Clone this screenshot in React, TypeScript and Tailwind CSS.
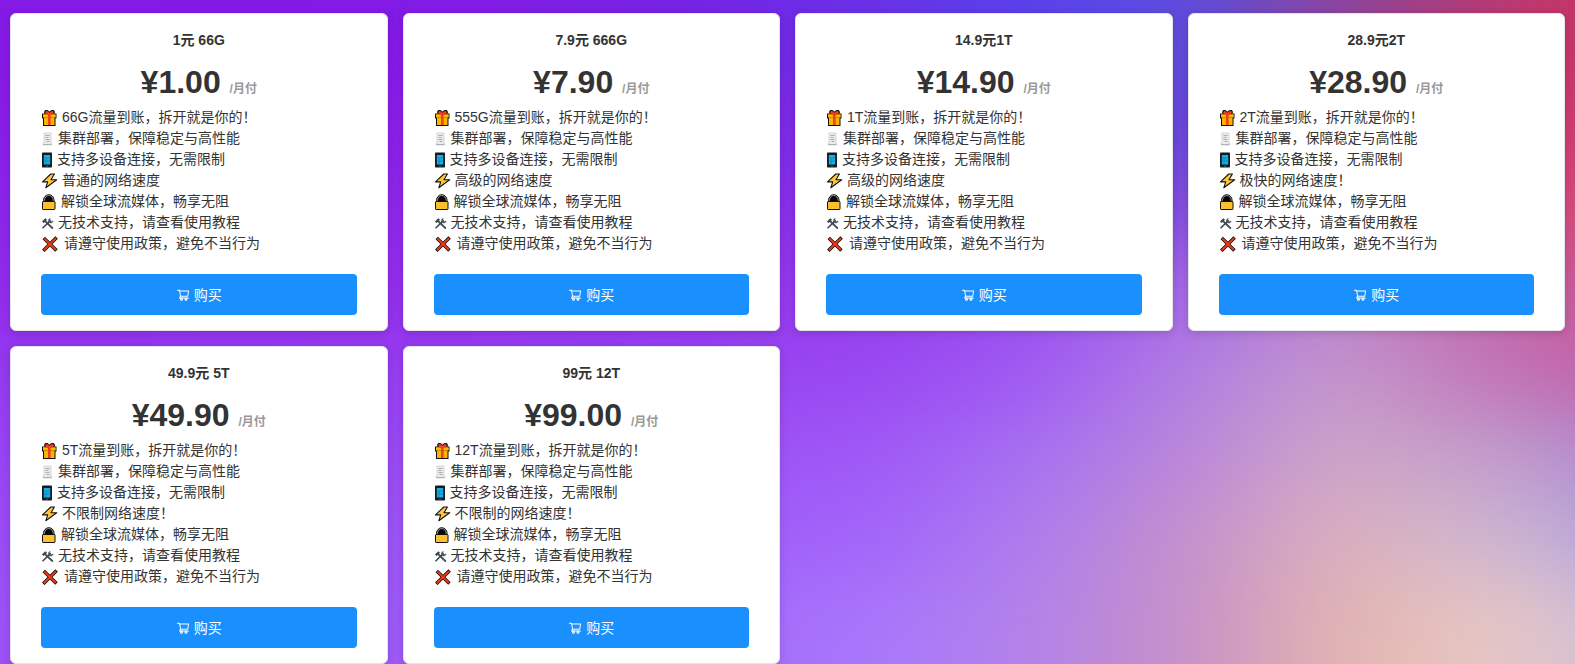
import React from "react";

type Plan = { title: string; price: string; traffic: string; speed: string };

const plans: Plan[] = [
  { title: "1元 66G", price: "¥1.00", traffic: "66G", speed: "普通的网络速度" },
  { title: "7.9元 666G", price: "¥7.90", traffic: "555G", speed: "高级的网络速度" },
  { title: "14.9元1T", price: "¥14.90", traffic: "1T", speed: "高级的网络速度" },
  { title: "28.9元2T", price: "¥28.90", traffic: "2T", speed: "极快的网络速度！" },
  { title: "49.9元 5T", price: "¥49.90", traffic: "5T", speed: "不限制网络速度！" },
  { title: "99元 12T", price: "¥99.00", traffic: "12T", speed: "不限制的网络速度！" },
];

const GiftIcon = () => (
  <svg className="h-4 w-[17px] shrink-0" viewBox="0 0 17 16" aria-hidden="true">
    <path d="M8 4.500C5.500 4.500 3.700 3 4.500 1.600 5.500.2 7.500 2 8.400 4 9.300 2 11.500.2 12.500 1.600c.8 1.400-1 2.900-3.500 2.900" fill="none" stroke="#111" strokeWidth="2.400" />
    <rect x="1.500" y="4" width="13.500" height="4" fill="#fba900" stroke="#111" />
    <rect x="2.500" y="7" width="11.500" height="8.500" fill="#fdb400" stroke="#111" />
    <rect x="2" y="4.500" width="12.500" height="3" fill="#ffb900" />
    <rect x="7" y="4" width="2.600" height="11" fill="#f0401c" />
    <path d="M8 4.200C6 4 4.500 2.800 5 2 5.700 1.200 7.500 2.500 8.400 4.200 9.300 2.500 11.300 1.200 12 2c.5.8-1 2-3 2.200" fill="none" stroke="#f0401c" strokeWidth="1.400" />
  </svg>
);

const PageIcon = () => (
  <svg className="h-4 w-[13px] shrink-0" viewBox="0 0 13 16" aria-hidden="true">
    <path d="M3 2h7v10.500h1V14H2.500L2 13V12h1z" fill="#ececec" stroke="#c9c9c9" strokeWidth=".7" />
    <path d="M4.500 4.500h4M4.500 6.500h3M4.500 8.500h4M5.500 10.500h3" stroke="#a5a5a5" strokeWidth=".9" />
    <path d="M2 13.500h8" stroke="#b0b0b0" strokeWidth="1" />
  </svg>
);

const PhoneIcon = () => (
  <svg className="h-4 w-3 shrink-0" viewBox="0 0 12 16" aria-hidden="true">
    <rect x="1" y=".5" width="10" height="15" rx=".8" fill="#151b20" />
    <rect x="2.800" y="3" width="6.400" height="9.500" fill="#17aee6" />
    <path d="M2.800 6h6.400M2.800 9h6.400M5 6v6.500" stroke="#0879aa" strokeWidth=".6" />
    <path d="M5 14.300h2" stroke="#6c7780" strokeWidth=".7" />
  </svg>
);

const BoltIcon = () => (
  <svg className="h-4 w-[17px] shrink-0" viewBox="0 0 17 16" aria-hidden="true">
    <path d="M9.800 1 1.500 8.900h5.200L4.800 14.800 15.700 6.700H10L13.400 1z" fill="#ffc83d" stroke="#111" strokeWidth="1.100" strokeLinejoin="round" />
  </svg>
);

const LockIcon = () => (
  <svg className="h-4 w-4 shrink-0" viewBox="0 0 16 16" aria-hidden="true">
    <path d="M2.500 8V6.500a5.300 5.800 0 0 1 10.600 0V8z" fill="#050505" stroke="#111" />
    <path d="M3.400 8V6.500a4.400 5 0 0 1 8.800 0V8" fill="none" stroke="#a8a8a8" strokeWidth=".9" />
    <rect x="1.500" y="7.500" width="12.500" height="8" rx=".6" fill="#fdc02c" stroke="#111" />
  </svg>
);

const ToolsIcon = () => (
  <svg className="h-4 w-[13px] shrink-0" viewBox="0 0 13 16" aria-hidden="true">
    <path d="M3.500 5.500 11.300 13" stroke="#47525a" strokeWidth="1.900" strokeLinecap="round" />
    <path d="M9.200 5.700 2 12.800" stroke="#3b454d" strokeWidth="1.600" strokeLinecap="round" />
    <path d="M1 6.500 4.400 3.200l1.600 1.600-3.400 3.100z" fill="#3b454d" />
    <path d="M9.200 3.300 8.600 5.500l1.300 1.200 2.300-.7a2.500 2.500 0 0 1-3.600 1.700L7.400 6.400A2.700 2.700 0 0 1 9.200 3.300z" fill="#47525a" stroke="#47525a" strokeWidth=".5" />
  </svg>
);

const CrossIcon = () => (
  <svg className="h-4 w-[19px] shrink-0" viewBox="0 0 19 16" aria-hidden="true">
    <path d="M4 3.200 14.200 13.200M14.400 2.800 3.500 13.600" stroke="#111" strokeWidth="3.500" strokeLinecap="square" />
    <path d="M4 3.200 14.200 13.200M14.400 2.800 3.500 13.600" stroke="#f03a17" strokeWidth="2" strokeLinecap="square" />
  </svg>
);

const CartIcon = () => (
  <svg className="h-3.5 w-3.5 shrink-0" viewBox="0 0 1024 1024" fill="currentColor" aria-hidden="true">
    <path d="M922.900 701.900H327.400l29.900-60.900 496.800-.9c16.800 0 31.200-12 34.200-28.600l68.800-385.100c1.800-10.100-.9-20.500-7.500-28.400a34.990 34.990 0 0 0-26.600-12.500l-632-2.100-5.400-25.400c-3.400-16.200-18-28-34.600-28H96.500a35.300 35.300 0 1 0 0 70.600h125.900L246 312.800l58.100 281.300-74.800 122.100a34.960 34.960 0 0 0-3 36.800c6 11.900 18.100 19.400 31.500 19.400h62.800a102.430 102.430 0 0 0-20.600 61.700c0 56.600 46 102.600 102.600 102.600s102.600-46 102.600-102.600c0-22.300-7.400-44-20.600-61.700h161.100a102.430 102.430 0 0 0-20.600 61.700c0 56.600 46 102.600 102.600 102.600s102.600-46 102.600-102.600c0-22.300-7.400-44-20.600-61.700H923c19.400 0 35.300-15.800 35.300-35.300a35.420 35.420 0 0 0-35.400-35.200zM305.700 253l575.800 1.900-56.400 315.800-452.300.8L305.700 253zm96.900 612.700c-17.400 0-31.600-14.200-31.600-31.600 0-17.400 14.200-31.600 31.600-31.600s31.600 14.200 31.600 31.600a31.600 31.600 0 0 1-31.600 31.600zm325.100 0c-17.400 0-31.600-14.200-31.600-31.600 0-17.400 14.200-31.600 31.600-31.600s31.600 14.200 31.600 31.600a31.600 31.600 0 0 1-31.600 31.600z" />
  </svg>
);

// Wallpaper colour samples, one row per band from top to bottom.
// The last column continues past the right edge.
const mesh: string[][] = [
  ["#8519e6", "#8419e6", "#831ae6", "#7e1ee6", "#7424e4", "#6a30e8", "#5840ec", "#5a4ee0", "#8a449c", "#b83a70", "#d03060"],
  ["#881ee7", "#881fe8", "#891fe8", "#8820e8", "#8424e6", "#7430e6", "#6440e8", "#6246dc", "#904aa0", "#c44078", "#da3864"],
  ["#8c25ea", "#8c26ea", "#8d27ea", "#8d28ea", "#8c2aea", "#8434ea", "#7c44e8", "#7c4ae0", "#b060b8", "#cc5488", "#e03c6c"],
  ["#912ceb", "#912dec", "#922eec", "#9230ec", "#9334ec", "#953cee", "#984eee", "#a668e8", "#bc84cc", "#c068a8", "#cc508c"],
  ["#943af0", "#953cf1", "#963ef1", "#9741f1", "#9744f2", "#9948f0", "#9f58f4", "#b07ee2", "#c498cc", "#c074b8", "#c45ca4"],
  ["#9844f4", "#9946f4", "#9a4af5", "#9b4ef6", "#9d52f6", "#9f58f6", "#a570f2", "#ba86da", "#cea6c6", "#c29ecc", "#a884d2"],
  ["#9a4cf5", "#9b50f6", "#9c54f6", "#9e58f7", "#a05ef8", "#a264fa", "#ac7cee", "#c490cc", "#dcb0bc", "#ceb8d0", "#ae9ce0"],
  ["#9c52f6", "#9d56f6", "#9e5af7", "#a060f8", "#a46afa", "#a876fc", "#b282ea", "#c690c8", "#e2b4b0", "#e8c8c4", "#c8badc"],
];

const Wallpaper = () => (
  <svg className="absolute inset-0 -z-10 h-full w-full" viewBox="0 0 1000 800" preserveAspectRatio="none" aria-hidden="true">
    <defs>
      <filter id="soften" filterUnits="userSpaceOnUse" x="-200" y="-200" width="1400" height="1200" colorInterpolationFilters="sRGB">
        <feGaussianBlur stdDeviation="42" />
      </filter>
    </defs>
    <g filter="url(#soften)">
      {mesh.map((row, r) =>
        row.map((color, c) => {
          const left = c === 0 ? -200 : c * 100;
          const top = r === 0 ? -200 : r * 100;
          const right = c === row.length - 1 ? 1200 : (c + 1) * 100 + 1;
          const bottom = r === mesh.length - 1 ? 1000 : (r + 1) * 100 + 1;
          return <rect key={`${r}-${c}`} x={left} y={top} width={right - left} height={bottom - top} fill={color} />;
        }),
      )}
    </g>
  </svg>
);

function Feature({ icon, children }: { icon: React.ReactNode; children: React.ReactNode }) {
  return (
    <li className="flex items-center gap-1">
      {icon}
      <span>{children}</span>
    </li>
  );
}

function PlanCard({ plan }: { plan: Plan }) {
  return (
    <article className="rounded-md border border-[#e4e4ec] bg-white px-[30px] pt-4 pb-[15px] shadow-[0_2px_8px_rgba(0,0,0,0.15)]">
      <h2 className="text-center text-sm leading-5 font-bold">{plan.title}</h2>
      <p className="mt-3 text-center text-[32px] leading-10 font-bold">
        {plan.price} <span className="text-xs text-[#999]">/月付</span>
      </p>
      <ul className="mt-[5px] text-sm leading-[21px]">
        <Feature icon={<GiftIcon />}>{plan.traffic}流量到账，拆开就是你的！</Feature>
        <Feature icon={<PageIcon />}>集群部署，保障稳定与高性能</Feature>
        <Feature icon={<PhoneIcon />}>支持多设备连接，无需限制</Feature>
        <Feature icon={<BoltIcon />}>{plan.speed}</Feature>
        <Feature icon={<LockIcon />}>解锁全球流媒体，畅享无阻</Feature>
        <Feature icon={<ToolsIcon />}>无技术支持，请查看使用教程</Feature>
        <Feature icon={<CrossIcon />}>请遵守使用政策，避免不当行为</Feature>
      </ul>
      <button type="button" className="mt-5 flex h-[41px] w-full items-center justify-center gap-1 rounded bg-[#1a90ff] text-sm text-white">
        <CartIcon />
        购买
      </button>
    </article>
  );
}

export default function App() {
  return (
    <main className="relative isolate min-h-screen overflow-hidden px-2.5 pt-[13px] font-['Liberation_Sans','Noto_Sans_CJK_SC',sans-serif] text-[#333]">
      <Wallpaper />
      <div className="grid grid-cols-4 gap-[15px]">
        {plans.map((plan) => (
          <PlanCard key={plan.title} plan={plan} />
        ))}
      </div>
    </main>
  );
}
